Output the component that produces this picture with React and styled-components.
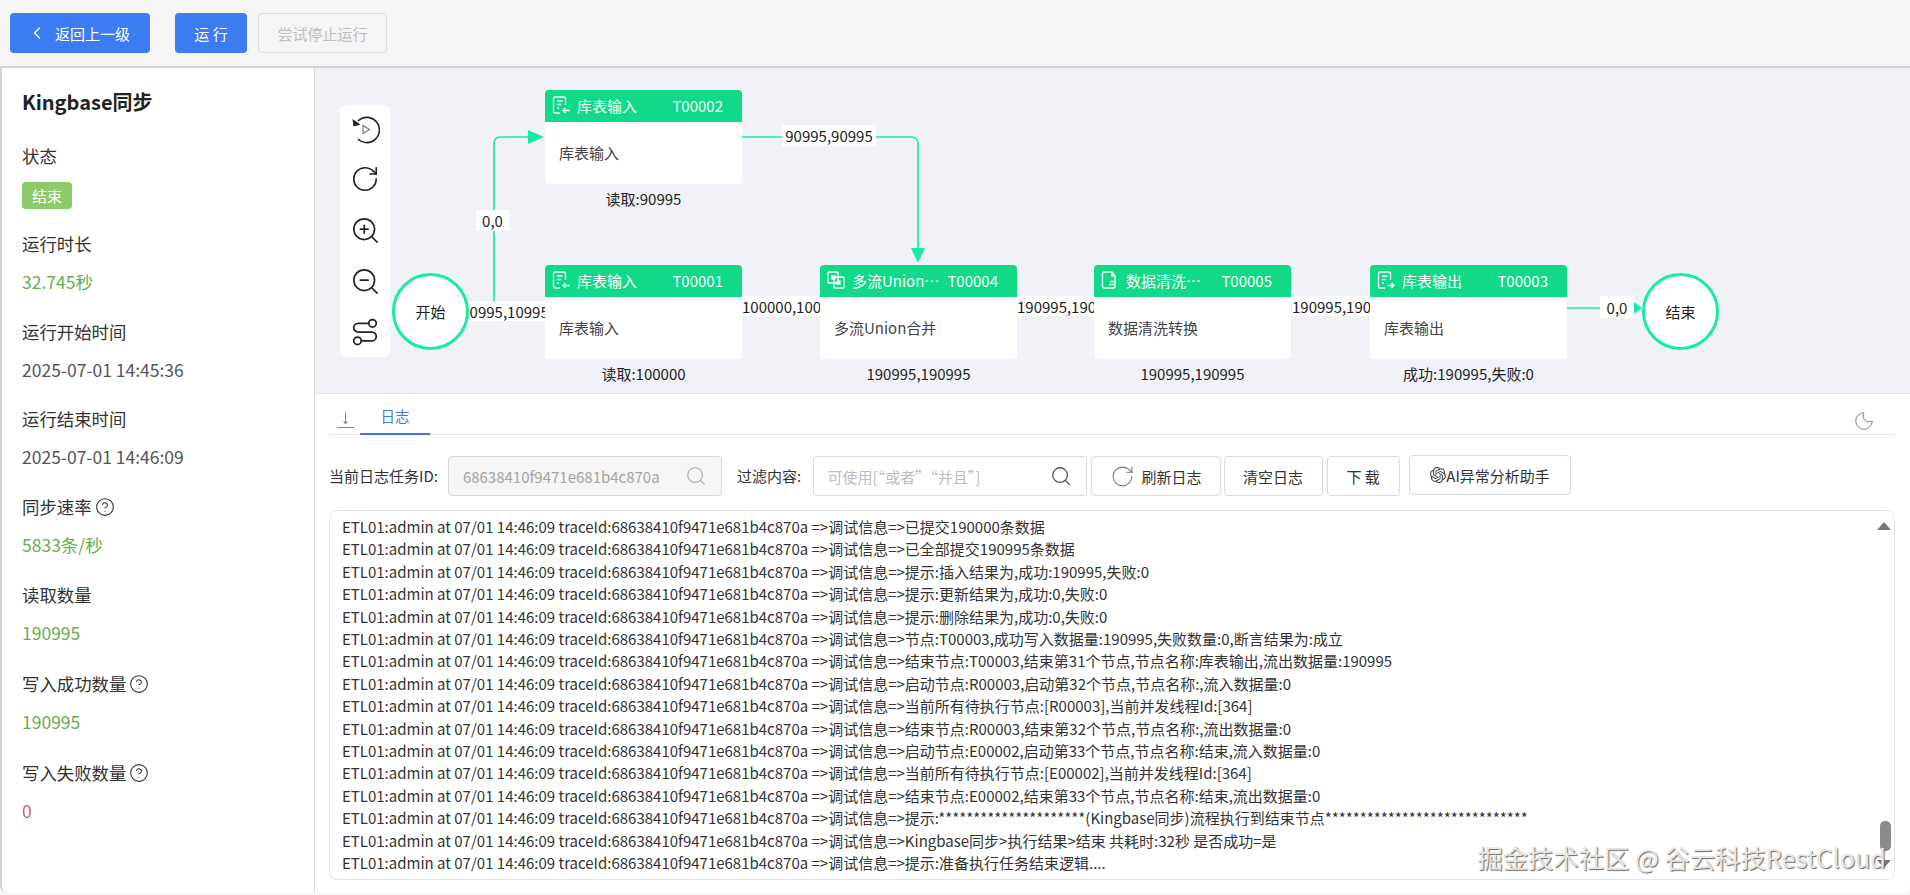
import React from 'react';
import styled, { createGlobalStyle } from 'styled-components';
import { ChevronLeft, CircleHelp, Moon, RotateCw, Route, Search, ZoomIn, ZoomOut } from 'lucide-react';
import { SiOpenai } from 'react-icons/si';

const GREEN = '#17eba5';
const FONT = '"Noto Sans CJK SC", "Noto Sans", sans-serif';

const GlobalStyle = createGlobalStyle`
  html, body {
    margin: 0;
    padding: 0;
    background: #f5f5f5;
    overflow: hidden;
    font-family: ${FONT};
  }
  * {
    box-sizing: border-box;
  }
`;

const LOG_PREFIX = 'ETL01:admin at 07/01 14:46:09 traceId:68638410f9471e681b4c870a =>';

const logLines = [
  '调试信息=>已提交190000条数据',
  '调试信息=>已全部提交190995条数据',
  '调试信息=>提示:插入结果为,成功:190995,失败:0',
  '调试信息=>提示:更新结果为,成功:0,失败:0',
  '调试信息=>提示:删除结果为,成功:0,失败:0',
  '调试信息=>节点:T00003,成功写入数据量:190995,失败数量:0,断言结果为:成立',
  '调试信息=>结束节点:T00003,结束第31个节点,节点名称:库表输出,流出数据量:190995',
  '调试信息=>启动节点:R00003,启动第32个节点,节点名称:,流入数据量:0',
  '调试信息=>当前所有待执行节点:[R00003],当前并发线程Id:[364]',
  '调试信息=>结束节点:R00003,结束第32个节点,节点名称:,流出数据量:0',
  '调试信息=>启动节点:E00002,启动第33个节点,节点名称:结束,流入数据量:0',
  '调试信息=>当前所有待执行节点:[E00002],当前并发线程Id:[364]',
  '调试信息=>结束节点:E00002,结束第33个节点,节点名称:结束,流出数据量:0',
  '调试信息=>提示:*********************(Kingbase同步)流程执行到结束节点*****************************',
  '调试信息=>Kingbase同步>执行结果>结束 共耗时:32秒 是否成功=是',
  '调试信息=>提示:准备执行任务结束逻辑....',
];

const fields = [
  { label: '运行时长', value: '32.745秒', tone: 'green', h: 88 },
  { label: '运行开始时间', value: '2025-07-01 14:45:36', h: 87 },
  { label: '运行结束时间', value: '2025-07-01 14:46:09', h: 88 },
  { label: '同步速率', value: '5833条/秒', tone: 'green', help: true, h: 88 },
  { label: '读取数量', value: '190995', tone: 'green', h: 89 },
  { label: '写入成功数量', value: '190995', tone: 'green', help: true, h: 89 },
  { label: '写入失败数量', value: '0', tone: 'red', help: true, h: 88 },
];

// 캔버스 기준 좌표
const nodes = [
  { id: 'T00002', title: '库表输入', body: '库表输入', foot: '读取:90995', icon: 'in', x: 230, y: 22 },
  { id: 'T00001', title: '库表输入', body: '库表输入', foot: '读取:100000', icon: 'in', x: 230, y: 197 },
  { id: 'T00004', title: '多流Union合并', body: '多流Union合并', foot: '190995,190995', icon: 'union', x: 505, y: 197 },
  { id: 'T00005', title: '数据清洗转换', body: '数据清洗转换', foot: '190995,190995', icon: 'clean', x: 779, y: 197 },
  { id: 'T00003', title: '库表输出', body: '库表输出', foot: '成功:190995,失败:0', icon: 'out', x: 1055, y: 197 },
];

const edgeLabels = [
  { text: '0,0', x: 161, y: 142, w: 33, h: 21 },
  { text: '10995,10995', x: 150, y: 233, w: 80, h: 20 },
  { text: '90995,90995', x: 467, y: 57, w: 94, h: 21 },
  { text: '100000,100000', x: 427, y: 228, w: 78, h: 20, left: true },
  { text: '190995,190995', x: 702, y: 228, w: 77, h: 20, left: true },
  { text: '190995,190995', x: 977, y: 228, w: 78, h: 20, left: true },
  { text: '0,0', x: 1285, y: 228, w: 34, h: 22 },
];

const NodeIcon = ({ kind }) => {
  if (kind === 'union') {
    return (
      <svg width="18" height="18" viewBox="0 0 18 18" fill="none" stroke="currentColor" strokeWidth="1.3">
        <rect x="1" y="1" width="10" height="11" rx="1" />
        <rect x="7" y="6" width="10" height="11" rx="1" />
        <rect x="5" y="5" width="3" height="3" fill="currentColor" />
        <rect x="10" y="10" width="3" height="3" fill="currentColor" />
      </svg>
    );
  }
  if (kind === 'clean') {
    return (
      <svg width="18" height="18" viewBox="0 0 18 18" fill="none" stroke="currentColor" strokeWidth="1.3">
        <path d="M11 1H3a1.5 1.5 0 0 0-1.5 1.5v13A1.5 1.5 0 0 0 3 17h9.5a1.5 1.5 0 0 0 1.5-1.5V5z" />
        <path d="M11 1v4h3.5M9 10.5h6M8 13.5h5" />
      </svg>
    );
  }
  return (
    <svg width="18" height="18" viewBox="0 0 18 18" fill="none" stroke="currentColor" strokeWidth="1.3">
      <path d="M13.5 9V2.5A1.5 1.5 0 0 0 12 1H3a1.5 1.5 0 0 0-1.5 1.5v13A1.5 1.5 0 0 0 3 17h5" />
      <path d="M5 5h5.5M5 8.5h4M5 12h2" />
      {kind === 'in' ? <path d="M17.5 14.5H11M13.5 12l-2.5 2.5 2.5 2.5" /> : <path d="M10.5 14.5H17M14.5 12l2.5 2.5-2.5 2.5" />}
    </svg>
  );
};

const ReplayIcon = () => (
  <svg width="29" height="29" viewBox="0 0 29 29" fill="none" stroke="#222" strokeWidth="1.6">
    <path d="M7 6a12.6 12.6 0 1 1 0 18" />
    <path d="M1.5 4l1 7.5 7-2z" fill="#222" stroke="none" />
    <path d="M12 10.5l6.5 4-6.5 4z" stroke="#777" strokeWidth="1.2" />
  </svg>
);

const App = () => (
  <>
    <GlobalStyle />
    <Page>
      <TopBar>
        <PrimaryButton $w={140}>
          <ChevronLeft size={20} strokeWidth={1.6} />
          <BackText>返回上一级</BackText>
        </PrimaryButton>
        <PrimaryButton $w={72} $gap={25}>运 行</PrimaryButton>
        <DisabledButton>尝试停止运行</DisabledButton>
      </TopBar>

      <Main>
        <InfoPanel>
          <Title>Kingbase同步</Title>
          <Field $h={88}>
            <FieldLabel>状态</FieldLabel>
            <StatusBadge>结束</StatusBadge>
          </Field>
          {fields.map((f) => (
            <Field key={f.label} $h={f.h}>
              <FieldLabel>
                {f.label}
                {f.help && <CircleHelp size={20} strokeWidth={1.3} color="#333" />}
              </FieldLabel>
              <FieldValue $tone={f.tone}>{f.value}</FieldValue>
            </Field>
          ))}
        </InfoPanel>

        <Content>
          <Canvas>
            <Edges viewBox="0 0 1595 326" width="1595" height="326" fill="none" stroke={GREEN} strokeWidth="1.7">
              <path d="M179 245V75a6 6 0 0 1 6-6h30" />
              <path d="M213 62l16 7-16 7z" fill={GREEN} stroke="none" />
              <path d="M427 69h170a6 6 0 0 1 6 6v108" />
              <path d="M596 180h14l-7 15z" fill={GREEN} stroke="none" />
              <path d="M1252 240h60" />
              <path d="M1319 234l8 6-8 6z" fill={GREEN} stroke="none" />
            </Edges>

            {edgeLabels.map((l, i) => (
              <EdgeLabel key={i} $x={l.x} $y={l.y} $w={l.w} $h={l.h} $left={l.left}>
                <span>{l.text}</span>
              </EdgeLabel>
            ))}

            <ToolBox>
              <ReplayIcon />
              <RotateCw size={30} strokeWidth={1.3} color="#222" />
              <ZoomIn size={31} strokeWidth={1.3} color="#222" />
              <ZoomOut size={31} strokeWidth={1.3} color="#222" />
              <Route size={30} strokeWidth={1.4} color="#222" />
            </ToolBox>

            <Terminal $x={77}>开始</Terminal>
            <Terminal $x={1327}>结束</Terminal>

            {nodes.map((n) => (
              <Node key={n.id} $x={n.x} $y={n.y}>
                <NodeHeader>
                  <NodeIcon kind={n.icon} />
                  <NodeTitle>{n.title}</NodeTitle>
                  <span>{n.id}</span>
                </NodeHeader>
                <NodeBody>{n.body}</NodeBody>
                <NodeFoot>{n.foot}</NodeFoot>
              </Node>
            ))}
          </Canvas>

          <LogPanel>
            <Tabs>
              <TabIcon>
                <svg width="17" height="16" viewBox="0 0 17 16" fill="none" stroke="#888" strokeWidth="1">
                  <path d="M8.5 0v11M6.5 9l2 3 2-3" />
                  <path d="M0 15.5h17" />
                </svg>
              </TabIcon>
              <ActiveTab>日志</ActiveTab>
              <MoonBox>
                <Moon size={22} strokeWidth={1} color="#777" />
              </MoonBox>
            </Tabs>

            <FilterRow>
              <FilterLabel>当前日志任务ID:</FilterLabel>
              <SearchBox $disabled>
                <input readOnly value="68638410f9471e681b4c870a" />
                <Search size={22} strokeWidth={1.2} color="#aaa" />
              </SearchBox>
              <FilterLabel $ml={15} $mr={11.5}>过滤内容:</FilterLabel>
              <SearchBox>
                <input readOnly placeholder="可使用[“或者”“并且”]" />
                <Search size={22} strokeWidth={1.4} color="#555" />
              </SearchBox>
              <GhostButton $w={130} $ml={4}>
                <RotateCw size={25} strokeWidth={1} color="#777" />
                <RefreshText>刷新日志</RefreshText>
              </GhostButton>
              <GhostButton $w={99} $ml={3}>清空日志</GhostButton>
              <GhostButton $w={73} $ml={4}>下 载</GhostButton>
              <GhostButton $w={162} $ml={9.5} $up>
                <SiOpenai size={16} color="#444" />
                AI异常分析助手
              </GhostButton>
            </FilterRow>

            <LogBox>
              {logLines.map((line, i) => (
                <LogLine key={i}>
                  {LOG_PREFIX}
                  {line}
                </LogLine>
              ))}
              <ScrollUp />
              <ScrollThumb />
              <ScrollDown />
              <Watermark>掘金技术社区 @ 谷云科技RestCloud</Watermark>
            </LogBox>
          </LogPanel>
        </Content>
      </Main>
    </Page>
  </>
);

export default App;

const Page = styled.div`
  width: 1910px;
  height: 895px;
  display: flex;
  flex-direction: column;
  color: #333;
`;

const TopBar = styled.div`
  height: 66px;
  padding: 13px 10px;
  display: flex;
  align-items: flex-start;
`;

const PrimaryButton = styled.button`
  width: ${(p) => p.$w}px;
  height: 40px;
  margin-left: ${(p) => p.$gap || 0}px;
  display: flex;
  align-items: center;
  justify-content: center;
  border: none;
  border-radius: 4px;
  background: #3c7cf2;
  color: #fff;
  font: 15px ${FONT};
`;

const BackText = styled.span`
  margin: 0 3px 0 8px;
`;

const DisabledButton = styled.button`
  width: 129px;
  height: 40px;
  margin-left: 11px;
  border: 1px solid #dcdcdc;
  border-radius: 4px;
  background: #f5f5f5;
  color: #bdbdbd;
  font: 15px ${FONT};
`;

const Main = styled.div`
  height: 827px;
  display: flex;
  border-top: 2px solid #d2d2d2;
  border-left: 2px solid #d2d2d2;
  border-radius: 0 0 8px 8px;
  background: #fff;
  overflow: hidden;
`;

const InfoPanel = styled.aside`
  width: 313px;
  flex-shrink: 0;
  padding: 20px 0 0 20px;
  border-right: 1px solid #d9d9d9;
`;

const Title = styled.h1`
  margin: 0 0 28px;
  font-size: 20px;
  line-height: 28px;
  font-weight: 700;
  color: #222;
`;

const Field = styled.div`
  height: ${(p) => p.$h}px;
`;

const FieldLabel = styled.div`
  height: 24px;
  margin-bottom: 14px;
  display: flex;
  align-items: center;
  gap: 3px;
  font-size: 17.4px;
  line-height: 24px;
  color: #333;
`;

const FieldValue = styled.div`
  font-size: 17.5px;
  line-height: 24px;
  color: ${(p) => (p.$tone === 'green' ? '#68ad4e' : p.$tone === 'red' ? '#c8625c' : '#555')};
`;

const StatusBadge = styled.div`
  width: 50px;
  height: 27px;
  border-radius: 4px;
  background: #8ccb68;
  color: #fff;
  font-size: 15px;
  line-height: 27px;
  text-align: center;
`;

const Content = styled.div`
  flex: 1;
  min-width: 0;
  display: flex;
  flex-direction: column;
`;

const Canvas = styled.section`
  position: relative;
  height: 326px;
  flex-shrink: 0;
  background: #f0f2f7;
  border-bottom: 1px solid #e2e4e9;
`;

const Edges = styled.svg`
  position: absolute;
  left: 0;
  top: 0;
`;

const EdgeLabel = styled.div`
  position: absolute;
  left: ${(p) => p.$x}px;
  top: ${(p) => p.$y}px;
  width: ${(p) => p.$w}px;
  height: ${(p) => p.$h}px;
  display: flex;
  align-items: center;
  justify-content: ${(p) => (p.$left ? 'flex-start' : 'center')};
  overflow: hidden;
  background: #fff;
  font-size: 15px;
  color: #222;
  white-space: nowrap;
`;

const ToolBox = styled.div`
  position: absolute;
  left: 25px;
  top: 37px;
  width: 50px;
  height: 252px;
  padding: 10px 0;
  display: flex;
  flex-direction: column;
  align-items: center;
  justify-content: space-between;
  border-radius: 6px;
  background: #fff;
`;

const Terminal = styled.div`
  position: absolute;
  left: ${(p) => p.$x}px;
  top: 205px;
  width: 77px;
  height: 77px;
  display: flex;
  align-items: center;
  justify-content: center;
  border: 3px solid ${GREEN};
  border-radius: 50%;
  background: #fff;
  font-size: 15px;
  color: #222;
`;

const Node = styled.div`
  position: absolute;
  left: ${(p) => p.$x}px;
  top: ${(p) => p.$y}px;
  width: 197px;
  height: 94px;
  border-radius: 4px;
  background: #fff;
`;

const NodeHeader = styled.div`
  height: 32px;
  padding: 0 19px 2px 7px;
  display: flex;
  align-items: center;
  justify-content: space-between;
  border-radius: 4px 4px 0 0;
  background: #10d988;
  color: #fff;
  font-size: 15px;
`;

const NodeTitle = styled.span`
  width: 88px;
  margin: 0 auto 0 7px;
  overflow: hidden;
  text-overflow: ellipsis;
  white-space: nowrap;
`;

const NodeBody = styled.div`
  padding: 20px 14px 0;
  font-size: 15px;
  line-height: 22px;
  color: #444;
`;

const NodeFoot = styled.div`
  position: absolute;
  left: 0;
  right: 0;
  top: 98px;
  font-size: 15px;
  line-height: 22px;
  text-align: center;
  color: #222;
`;

const LogPanel = styled.section`
  flex: 1;
  min-height: 0;
  padding: 0 15px 0 14px;
`;

const Tabs = styled.div`
  height: 41px;
  display: flex;
  align-items: stretch;
  border-bottom: 1px solid #e4e4e4;
`;

const TabIcon = styled.div`
  width: 31px;
  padding: 15px 0 0 8px;
`;

const ActiveTab = styled.div`
  width: 70px;
  margin-bottom: -1px;
  border-bottom: 2px solid #3c78e8;
  font-size: 14.5px;
  line-height: 44px;
  text-align: center;
  color: #3c78e8;
`;

const MoonBox = styled.div`
  margin-left: auto;
  padding: 16px 20px 0 0;
`;

const FilterRow = styled.div`
  height: 75px;
  padding-top: 21px;
  display: flex;
  align-items: flex-start;
`;

const FilterLabel = styled.label`
  margin-left: ${(p) => p.$ml || 0}px;
  margin-right: ${(p) => p.$mr || 10}px;
  font-size: 15px;
  line-height: 40px;
  color: #333;
  white-space: nowrap;
`;

const SearchBox = styled.div`
  width: 274px;
  height: 40px;
  padding: 0 14px;
  display: flex;
  align-items: center;
  border: 1px solid #d9d9d9;
  border-radius: 4px;
  background: ${(p) => (p.$disabled ? '#f5f5f5' : '#fff')};

  input {
    flex: 1;
    min-width: 0;
    padding: 0;
    border: none;
    outline: none;
    background: transparent;
    color: #a3a3a3;
    font: 15px ${FONT};
  }

  input::placeholder {
    color: #bdbdbd;
  }
`;

const GhostButton = styled.button`
  width: ${(p) => p.$w}px;
  height: 40px;
  margin-left: ${(p) => p.$ml}px;
  margin-top: ${(p) => (p.$up ? -1 : 0)}px;
  display: flex;
  align-items: center;
  justify-content: center;
  border: 1px solid #d9d9d9;
  border-radius: 4px;
  background: #fff;
  color: #333;
  font: 15px ${FONT};
`;

const RefreshText = styled.span`
  margin-left: 7px;
`;

const LogBox = styled.div`
  position: relative;
  height: 370px;
  padding: 5px 0 0 12px;
  overflow: hidden;
  border: 1px solid #e4e4e4;
  border-radius: 8px;
`;

const LogLine = styled.div`
  font-size: 15px;
  line-height: 22.4px;
  color: #333;
  white-space: nowrap;
`;

const ScrollUp = styled.div`
  position: absolute;
  right: 3px;
  top: 11px;
  width: 0;
  height: 0;
  border: 7px solid transparent;
  border-top: none;
  border-bottom: 8px solid #777;
`;

const ScrollThumb = styled.div`
  position: absolute;
  right: 3px;
  top: 310px;
  width: 11px;
  height: 30px;
  border-radius: 5px;
  background: #8c8c8c;
`;

const ScrollDown = styled.div`
  position: absolute;
  right: 3px;
  top: 349px;
  width: 0;
  height: 0;
  border: 7px solid transparent;
  border-bottom: none;
  border-top: 8px solid #777;
`;

const Watermark = styled.div`
  position: absolute;
  right: 8px;
  top: 329px;
  font-size: 25.3px;
  line-height: 34px;
  color: #e6e6e6;
  text-shadow: 1px 1px 1px #666;
  white-space: nowrap;
`;
